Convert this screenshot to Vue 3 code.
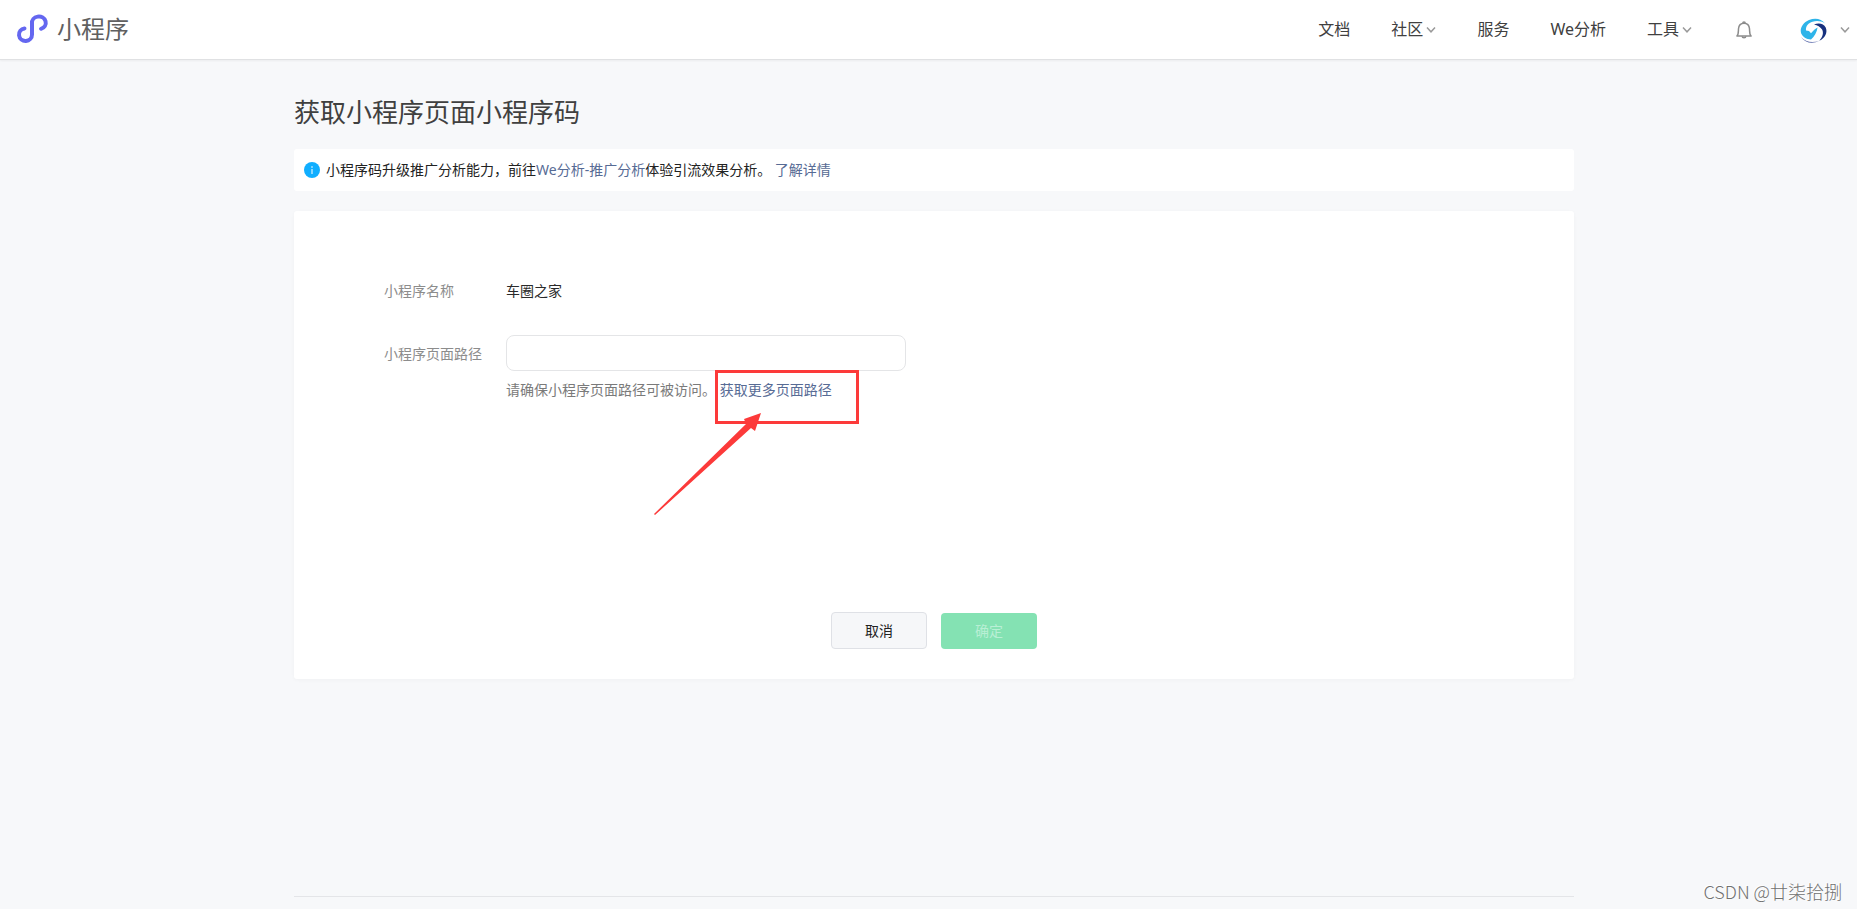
<script setup>
import { ref } from 'vue'

const navItems = [
  { text: '文档', menu: false },
  { text: '社区', menu: true },
  { text: '服务', menu: false },
  { text: 'We分析', menu: false },
  { text: '工具', menu: true },
]
const path = ref('')
</script>

<template>
  <div class="page">
    <header class="topbar">
      <a class="brand" href="#">
        <svg class="brand-mark" width="34" height="30" viewBox="0 0 34 30" fill="none" stroke="#6467f0" stroke-width="4" stroke-linecap="round" aria-hidden="true">
          <path d="M8.500 14.400A6.500 6.300 0 1 0 16 20.500V9.500A6.900 6.300 0 1 1 25 14.800" />
        </svg>
        <span>小程序</span>
      </a>
      <nav class="nav">
        <a v-for="item in navItems" :key="item.text" class="nav-link" href="#">
          {{ item.text }}
          <svg v-if="item.menu" class="chevron" width="10" height="10" viewBox="0 0 10 10" aria-hidden="true"><path d="M1 2.500 5 6.800 9 2.500" /></svg>
        </a>
      </nav>
      <button class="icon-button bell" type="button" aria-label="通知">
        <svg width="16" height="18" viewBox="0 0 16 18" fill="none" stroke="#8c8c8c" stroke-width="1.500" stroke-linejoin="round" aria-hidden="true">
          <path d="M.9 15.100C2.600 13.600 2.300 10.800 2.500 7.800 2.800 4.300 4.800 2.200 8 2.200s5.200 2.100 5.500 5.600c.2 3-.1 5.800 1.600 7.300z" />
          <path d="M6.800 2.200a1.200 1.200 0 0 1 2.400 0M6.200 15.300a1.800 1.500 0 0 0 3.600 0" />
        </svg>
      </button>
      <button class="icon-button account" type="button" aria-label="账号">
        <svg width="28" height="26" viewBox="0 0 28 26" aria-hidden="true">
          <path fill="#2fb4e9" d="M25 6.500C21.500 1.500 15 .5 9 3 2.500 5.700-.5 12 1.200 16.500 2.500 19.500 6.500 22.500 11 22.500 14.500 19.500 17 15 17.600 10.500 15.500 11.500 13 13.800 11 16.200L9 14 6 13.500C5.500 9.500 8 6 12.500 4.700 17 3.500 21.500 4 25 6.500z" />
          <path fill="#17317f" d="M14 7.500c4.500-2 9.700-1.200 11.700 3 2.200 5-.6 10.500-6.400 13.300 3.200-3.600 4.800-8 2.600-11.500-1.600-2.400-4.300-3.800-7.900-4.800z" />
          <path fill="#5464a7" d="M1 20c4.500 5.300 11.500 6.200 18.300 3.800C13 27.300 5 26.300 1 20z" />
        </svg>
        <svg class="chevron" width="10" height="10" viewBox="0 0 10 10" aria-hidden="true"><path d="M1 2.500 5 6.800 9 2.500" /></svg>
      </button>
    </header>

    <main class="content">
      <h1>获取小程序页面小程序码</h1>
      <div class="notice">
        <svg width="16" height="16" viewBox="0 0 16 16" aria-hidden="true">
          <circle cx="8" cy="8" r="8" fill="#10aeff" />
          <path d="M8 7v5" stroke="#fff" stroke-width="1" />
          <circle cx="8" cy="5" r=".8" fill="#fff" />
        </svg>
        <p>小程序码升级推广分析能力，前往<a href="#">We分析-推广分析</a>体验引流效果分析。 <a href="#">了解详情</a></p>
      </div>

      <form class="card" @submit.prevent>
        <div class="row">
          <span class="label">小程序名称</span>
          <span class="value">车圈之家</span>
        </div>
        <div class="row">
          <label class="label" for="page-path">小程序页面路径</label>
          <div class="field">
            <input id="page-path" v-model="path" type="text" />
            <p class="hint">请确保小程序页面路径可被访问。 <span class="marked"><a href="#">获取更多页面路径</a><span class="mark-box"></span><svg class="mark-arrow" width="108" height="103" viewBox="0 0 108 103" aria-hidden="true"><path fill="#fc3a3a" d="M107 0 101 18 97 15 1 102 0 101 92 11 90 6Z" /></svg></span></p>
          </div>
        </div>
        <div class="actions">
          <button class="cancel" type="button">取消</button>
          <button class="confirm" type="submit" disabled>确定</button>
        </div>
      </form>
    </main>
    <footer class="footer"></footer>
    <span class="watermark">CSDN @廿柒拾捌</span>
  </div>
</template>

<style>
body {
  margin: 0;
}
</style>

<style scoped>
.page {
  position: relative;
  box-sizing: border-box;
  min-height: 100vh;
  display: flex;
  flex-direction: column;
  padding-bottom: 12px;
  background: #f7f8fa;
  color: #404040;
  font: 400 14px/20px "Noto Sans", "Noto Sans CJK SC", sans-serif;
}
a {
  color: #576b95;
  text-decoration: none;
}
p,
h1 {
  margin: 0;
}
.topbar {
  display: flex;
  align-items: center;
  height: 59px;
  padding: 0 7px 0 16px;
  background: #fff;
  border-bottom: 1px solid #e0e1e3;
  box-shadow: 0 1px 2px rgba(0, 0, 0, 0.05);
}
.brand {
  display: flex;
  align-items: center;
  gap: 7px;
  height: 56px;
  padding-bottom: 2px;
  color: #606060;
  font-size: 24px;
  line-height: 54px;
}
.nav {
  display: flex;
  gap: 41px;
  margin-left: auto;
  padding-bottom: 2px;
}
.nav-link {
  display: flex;
  align-items: center;
  gap: 3px;
  color: #404040;
  font-size: 16px;
  line-height: 24px;
}
.chevron {
  margin-top: 2px;
  fill: none;
  stroke: #9a9a9a;
  stroke-width: 1.5;
}
.icon-button {
  display: flex;
  align-items: center;
  padding: 0;
  border: 0;
  background: none;
}
.bell {
  margin-left: 44px;
}
.account {
  gap: 12px;
  margin-left: 48px;
}
.account .chevron {
  margin-top: 0;
}
.content,
.footer {
  width: 1280px;
  max-width: 100%;
  align-self: center;
  margin-left: 11px;
}
h1 {
  margin-top: 34px;
  font-size: 26px;
  font-weight: 400;
  line-height: 36px;
}
.notice {
  display: flex;
  align-items: center;
  gap: 6px;
  height: 42px;
  margin-top: 19px;
  padding: 0 10px;
  border-radius: 3px;
  background: #fff;
  color: #222;
}
.card {
  box-sizing: border-box;
  margin-top: 20px;
  padding: 70px 90px 30px;
  border-radius: 3px;
  background: #fff;
  box-shadow: 0 1px 4px rgba(0, 0, 0, 0.03);
}
.row {
  display: flex;
  line-height: 20px;
}
.row + .row {
  margin-top: 34px;
}
.label {
  width: 122px;
  color: #8c8c8c;
}
.row + .row .label {
  padding-top: 9px;
}
.value {
  color: #2a2a2a;
}
.field {
  width: 400px;
}
.field input {
  display: block;
  box-sizing: border-box;
  width: 100%;
  height: 36px;
  padding: 0 10px;
  border: 1px solid #e4e5e7;
  border-radius: 8px;
  background: #fff;
  font: inherit;
  outline: none;
}
.hint {
  margin-top: 9px;
  color: #7a7a7a;
  white-space: nowrap;
}
.marked {
  position: relative;
  display: inline-block;
}
.mark-box {
  position: absolute;
  left: -5px;
  top: -10px;
  box-sizing: border-box;
  width: 144px;
  height: 54px;
  border: 3px solid #fc3a3a;
}
.mark-arrow {
  position: absolute;
  left: -66px;
  top: 33px;
}
.actions {
  display: flex;
  justify-content: center;
  align-items: flex-end;
  gap: 14px;
  margin-top: 212px;
}
.actions button {
  box-sizing: border-box;
  width: 96px;
  height: 36px;
  padding: 0;
  border: 0;
  border-radius: 4px;
  font: inherit;
}
.actions .cancel {
  height: 37px;
  border: 1px solid #dfe1e6;
  background: #f6f7f9;
  color: #222;
}
.actions .confirm {
  background: #84e2b3;
  color: #b9efd5;
}
.footer {
  margin-top: auto;
  border-top: 1px solid #e4e5e8;
}
.watermark {
  position: absolute;
  right: 15px;
  bottom: 5px;
  color: #707070;
  font-family: "Noto Sans CJK SC", sans-serif;
  font-size: 18px;
  font-weight: 300;
  line-height: 26px;
  text-shadow: -1px -1px 0 #fff;
}
</style>
